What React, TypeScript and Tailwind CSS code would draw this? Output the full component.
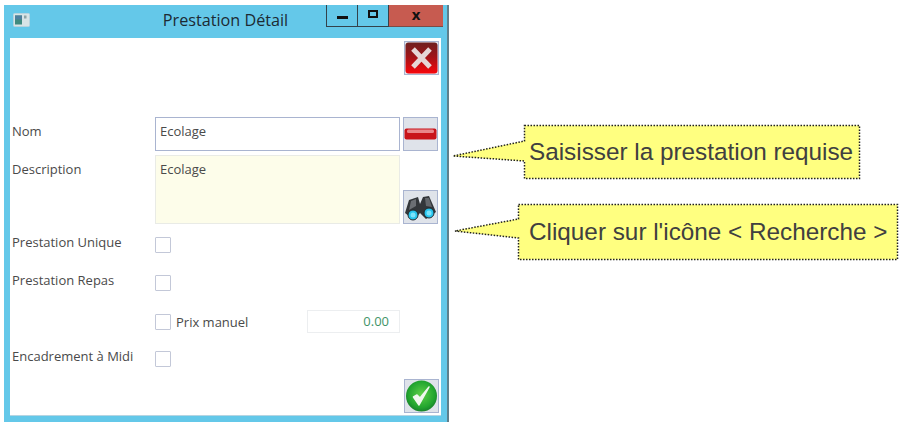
import type { ReactNode } from 'react';

const uiFont = "font-['Open_Sans','Noto_Sans',sans-serif]";

function IconButton({ children, className = '' }: { children: ReactNode; className?: string }) {
  return (
    <div className={`w-[35px] h-[34px] border border-[#a9b4d0] bg-[#dfe3ea] flex items-center justify-center ${className}`}>
      {children}
    </div>
  );
}

function CloseIcon() {
  return (
    <svg className="blur-[0.6px]" width="33" height="32" viewBox="0 0 33 32">
      <defs>
        <linearGradient id="closeBg" x1="0" y1="0" x2="0" y2="1">
          <stop offset="0" stopColor="#6e2020" />
          <stop offset="0.45" stopColor="#a01418" />
          <stop offset="1" stopColor="#f8060c" />
        </linearGradient>
      </defs>
      <rect x="0.5" y="0.5" width="32" height="31" rx="3" fill="url(#closeBg)" />
      <path d="M8 7 L25 25 M25 7 L8 25" stroke="#e6d6d6" strokeWidth="5" />
    </svg>
  );
}

function MinusIcon() {
  return (
    <svg className="blur-[0.5px]" width="33" height="12" viewBox="0 0 33 12">
      <rect x="0.5" y="0.5" width="32" height="11" rx="2" fill="#c9141a" />
      <rect x="3" y="1.5" width="27" height="3.5" rx="1.5" fill="#e9868a" />
    </svg>
  );
}

function BinocularsIcon() {
  return (
    <svg className="blur-[0.6px]" width="33" height="30" viewBox="0 0 33 30">
      <path d="M5 8 L14 5 L16 12 L19 5 L25 4 L32 20 L22 27 L16 21 L10 28 L1 21 Z" fill="#33363a" />
      <path d="M7 9 L12 7 L12 14 L5 18 Z" fill="#6b6e73" />
      <path d="M21 6 L25 6 L28 15 L22 14 Z" fill="#63666b" />
      <circle cx="9" cy="23" r="5" fill="#27c5ee" stroke="#23282d" strokeWidth="1" />
      <circle cx="25" cy="21" r="5" fill="#27c5ee" stroke="#23282d" strokeWidth="1" />
      <circle cx="9" cy="23" r="2.5" fill="#7be3fb" />
      <circle cx="25" cy="21" r="2.5" fill="#7be3fb" />
    </svg>
  );
}

function CheckIcon() {
  return (
    <svg className="blur-[0.6px]" width="33" height="32" viewBox="0 0 33 32">
      <defs>
        <radialGradient id="okBg" cx="0.5" cy="0.45" r="0.6">
          <stop offset="0" stopColor="#5fd048" />
          <stop offset="0.7" stopColor="#22a52f" />
          <stop offset="1" stopColor="#16752a" />
        </radialGradient>
      </defs>
      <circle cx="16.5" cy="16" r="15.5" fill="url(#okBg)" />
      <path d="M8.5 17 L14 25 L24 7 L15 18 L12 15 Z" fill="#f1f7ef" stroke="#f1f7ef" strokeWidth="1.5" strokeLinejoin="round" />
    </svg>
  );
}

function WindowIcon() {
  return (
    <svg className="blur-[0.4px]" width="17" height="14" viewBox="0 0 17 14">
      <rect x="0.5" y="0.5" width="16" height="13" rx="1" fill="#d8e4e6" stroke="#b6d3de" />
      <rect x="2" y="2.5" width="7" height="9" fill="#3f8a80" />
      <rect x="2" y="2.5" width="7" height="4" fill="#4d7f9e" />
      <rect x="11" y="2.5" width="2.5" height="3" fill="#8ea4a6" />
    </svg>
  );
}

function Checkbox() {
  return <div className="w-4 h-4 shrink-0 border border-[#c3c8d8] bg-white rounded-[1px]" />;
}

function CheckRow({ label, className }: { label: string; className: string }) {
  return (
    <div className={`flex ${className}`}>
      <span className="w-[143px] -ml-px text-[13px] leading-[16px] -mt-[3px] text-[#4a4a4a] whitespace-nowrap">{label}</span>
      <Checkbox />
    </div>
  );
}

function Callout({ tail, box, className }: { tail: string; box: string; className: string }) {
  return (
    <svg className={`absolute ${className}`}>
      <path d={tail} fill="#ffff80" />
      <path d={box} fill="#ffff80" stroke="#222" strokeWidth="1.5" strokeDasharray="1.5 1.5" />
    </svg>
  );
}

export default function App() {
  return (
    <div className="relative w-[906px] h-[431px] bg-white overflow-hidden pt-[5px] pl-[4px]">
      {/* Window */}
      <div className={`w-[445px] h-[417px] bg-[#64c8e9] border-r-2 border-r-[#5f7f8c] flex flex-col ${uiFont}`}>
        <div className="h-[33px] shrink-0 grid grid-cols-[1fr_auto_1fr]">
          <div className="pl-[9px] pt-[8px]">
            <WindowIcon />
          </div>
          <div className="text-[16.2px] leading-[31px] text-[#1c2a33] whitespace-nowrap">Prestation Détail</div>
          <div className="flex justify-end items-start pr-[4px]">
            <div className="w-[32px] h-[22px] border border-t-0 border-[#33424a] flex items-center justify-center">
              <div className="w-[11px] h-[3px] mt-[4px] bg-[#111]" />
            </div>
            <div className="w-[31px] h-[22px] border border-t-0 border-l-0 border-[#33424a] flex items-center justify-center">
              <div className="w-[10px] h-[8px] -mt-[3px] border-2 border-[#111]" />
            </div>
            <div className="w-[54px] h-[22px] bg-[#c75b50] border-b border-[#7d4a44] flex justify-center text-[15px] leading-[18px] font-bold text-[#111]">
              x
            </div>
          </div>
        </div>

        {/* Form */}
        <div className="ml-[6px] mr-[6px] w-[431px] h-[378px] bg-white border-b border-b-[#b5d5e2] pl-[3px] pt-[3px] flex flex-col">
          <div className="flex justify-end pr-[2px]">
            <IconButton>
              <CloseIcon />
            </IconButton>
          </div>

          <div className="flex mt-[42px] h-[34px]">
            <span className="w-[143px] -ml-px pt-[6px] text-[13px] leading-[16px] text-[#4a4a4a]">Nom</span>
            <div className="w-[245px] h-[34px] border border-[#a9b4d0] bg-white px-[4px] pt-[5px] text-[13px] leading-[16px] text-[#4a4a4a]">
              Ecolage
            </div>
            <IconButton className="ml-[3px]">
              <MinusIcon />
            </IconButton>
          </div>

          <div className="flex mt-[4px] h-[69px]">
            <span className="w-[143px] -ml-px pt-[6px] text-[13px] leading-[16px] text-[#4a4a4a]">Description</span>
            <div className="w-[245px] h-[69px] border border-[#e9ebe6] bg-[#fdfdea] px-[4px] pt-[5px] text-[13px] leading-[16px] text-[#4a4a4a]">
              Ecolage
            </div>
            <div className="ml-[3px] self-end">
              <IconButton>
                <BinocularsIcon />
              </IconButton>
            </div>
          </div>

          <CheckRow label="Prestation Unique" className="mt-[13px]" />
          <CheckRow label="Prestation Repas" className="mt-[22px]" />

          <div className="flex items-center mt-[19px] h-[23px] pl-[142px]">
            <Checkbox />
            <span className="ml-[5px] w-[131px] text-[13px] leading-[16px] text-[#4a4a4a]">Prix manuel</span>
            <div className="w-[93px] h-[23px] border border-[#eceef0] text-right pr-[10px] text-[13px] leading-[21px] text-[#3f9468]">
              0.00
            </div>
          </div>

          <CheckRow label="Encadrement à Midi" className="mt-[18px]" />

          <div className="flex justify-end pr-[2px] mt-[12px]">
            <IconButton>
              <CheckIcon />
            </IconButton>
          </div>
        </div>
      </div>

      {/* Callouts */}
      <Callout
        className="left-[450px] top-[120px] w-[416px] h-[64px]"
        tail="M3 36 L75 21 L75 41 Z"
        box="M74.5 5.5 H409.5 V58.5 H74.5 V41 L3 36 L74.5 21 Z"
      />
      <div className="absolute left-[529px] top-[138px] font-['Liberation_Sans',Arial,sans-serif] text-[24.3px] leading-[28px] text-[#404040] whitespace-nowrap">
        Saisisser la prestation requise
      </div>

      <Callout
        className="left-[450px] top-[199px] w-[454px] h-[66px]"
        tail="M5 32 L69 20 L69 39 Z"
        box="M68.5 5.5 H447.5 V60.5 H68.5 V39 L5 32 L68.5 20 Z"
      />
      <div className="absolute left-[529px] top-[218px] font-['Liberation_Sans',Arial,sans-serif] text-[24.3px] leading-[28px] text-[#404040] whitespace-nowrap">
        Cliquer sur l'icône &lt; Recherche &gt;
      </div>
    </div>
  );
}
